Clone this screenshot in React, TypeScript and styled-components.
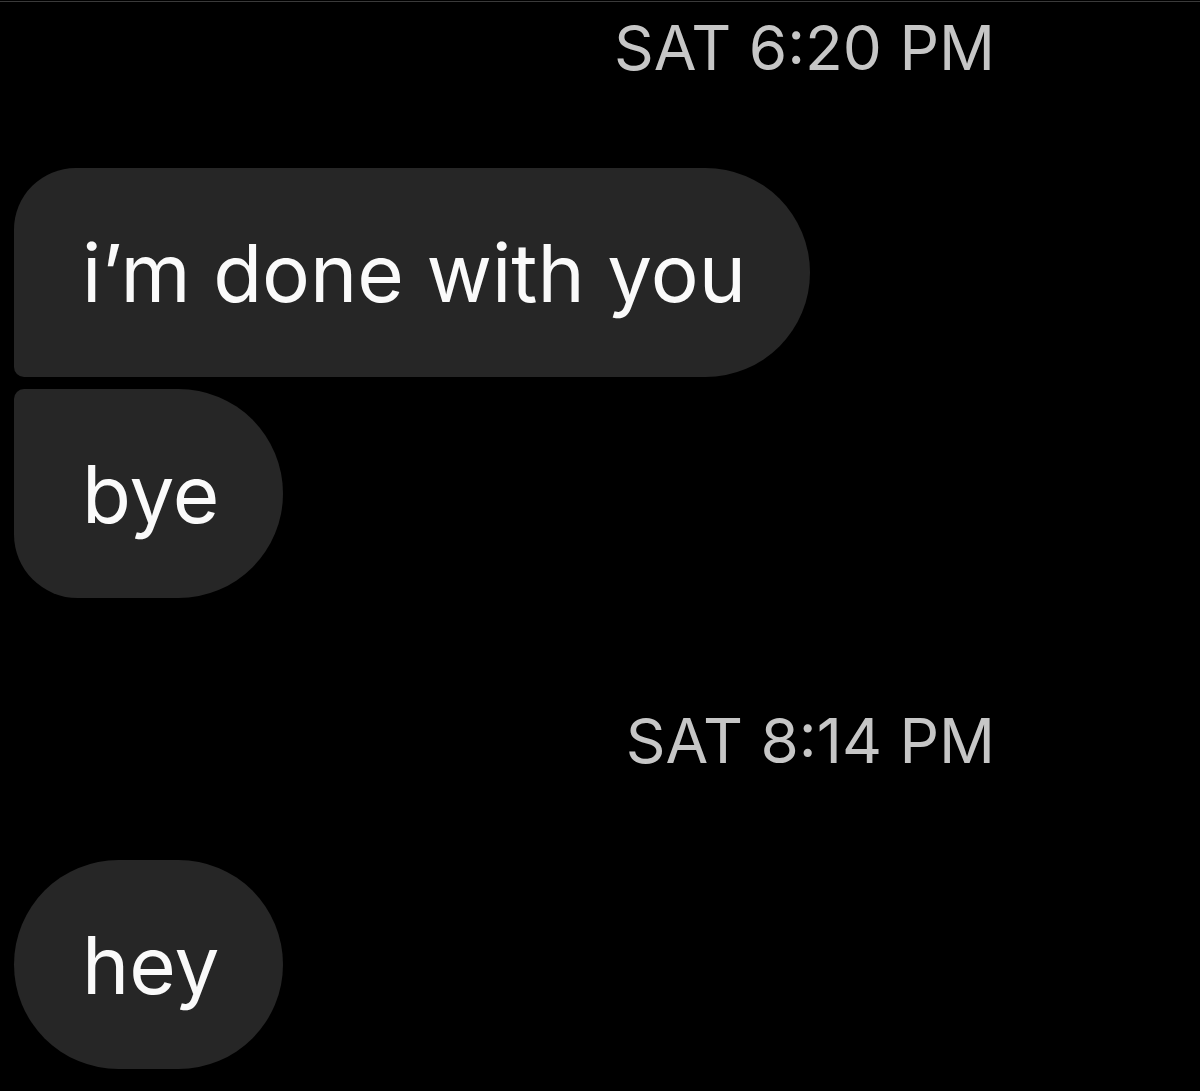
import React from "react";
import styled, { createGlobalStyle } from "styled-components";

const Global = createGlobalStyle`
  html, body { margin: 0; padding: 0; background: #000; }
  body { font-family: Inter, "Liberation Sans", sans-serif; }
`;

const Screen = styled.div`
  width: 1200px;
  height: 1091px;
  background: #000;
  border-top: 1px solid #3a3a3a;
  margin-top: 1px;
  box-sizing: border-box;
  display: flex;
  flex-direction: column;
  align-items: flex-start;
  padding: 0 0 0 14px;
  overflow: hidden;
`;

const Stamp = styled.div<{ $top: number; $bottom: number }>`
  align-self: stretch;
  text-align: right;
  padding-right: 205px;
  margin-top: ${(p) => p.$top}px;
  margin-bottom: ${(p) => p.$bottom}px;
  font-size: 62px;
  line-height: 1;
  color: #c6c6c6;
`;

type Shape = "first" | "last" | "single";

const radius: Record<Shape, string> = {
  first: "62px 105px 105px 10px",
  last: "10px 105px 105px 64px",
  single: "105px",
};

const Bubble = styled.div<{ $shape: Shape; $gap?: number }>`
  display: inline-flex;
  align-items: center;
  height: 209px;
  padding: 0 64px 0 68px;
  box-sizing: border-box;
  background: #262626;
  color: #fafafa;
  font-size: 80px;
  border-radius: ${(p) => radius[p.$shape]};
  margin-top: ${(p) => p.$gap ?? 0}px;
  white-space: nowrap;
`;

export default function App() {
  return (
    <>
      <Global />
      <Screen>
        <Stamp $top={15} $bottom={89}>SAT 6:20 PM</Stamp>
        <Bubble $shape="first">i’m done with you</Bubble>
        <Bubble $shape="last" $gap={12}>bye</Bubble>
        <Stamp $top={112} $bottom={88}>SAT 8:14 PM</Stamp>
        <Bubble $shape="single">hey</Bubble>
      </Screen>
    </>
  );
}
